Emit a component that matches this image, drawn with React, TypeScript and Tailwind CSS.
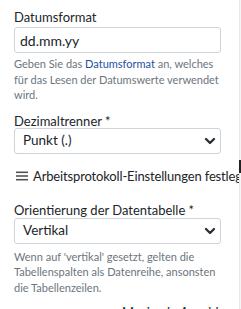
import { ChevronDown } from 'lucide-react';

const font = { fontFamily: 'Lato, "Open Sans", sans-serif' };

const Select = ({ value }: { value: string }) => (
  <div className="flex h-[26px] w-[207px] items-center justify-between rounded-[3px] border border-[#ced4da] bg-white pl-[8px] pr-[2px]">
    <span className="text-[13.5px] text-[#212529]">{value}</span>
    <ChevronDown className="h-[16px] w-[16px] text-[#2b3035]" strokeWidth={3.5} />
  </div>
);

export default function App() {
  return (
    <div className="flex h-[309px] w-[241px] overflow-hidden bg-white" style={font}>
      <div className="w-[239px] shrink-0 overflow-hidden pl-[14px] pt-[10px]">
        {/* Datumsformat */}
        <label className="block text-[13px] leading-[14px] text-[#212529]">Datumsformat</label>
        <div className="mt-[3px] flex h-[26px] w-[207px] items-center rounded-[3px] border border-[#ced4da] bg-white pl-[5px]">
          <span className="text-[14px] text-[#212529]">dd.mm.yy</span>
        </div>
        <p className="mt-[3px] w-[215px] text-[11px] leading-[15.5px] text-[#6c757d]">
          Geben Sie das <span className="text-[#1f4fa3]">Datumsformat</span> an, welches für das Lesen der Datumswerte verwendet wird.
        </p>

        {/* Dezimaltrenner */}
        <label className="mt-[11px] block text-[13px] leading-[14px] text-[#212529]">Dezimaltrenner *</label>
        <Select value="Punkt (.)" />

        {/* Arbeitsprotokoll */}
        <div className="mt-[12px] flex h-[20px] items-center whitespace-nowrap">
          <svg width="12" height="10" viewBox="0 0 12 10" className="ml-[2px] mr-[5px] shrink-0">
            <rect x="0" y="0.5" width="12" height="1.6" fill="#555" />
            <rect x="0" y="4.2" width="12" height="1.6" fill="#555" />
            <rect x="0" y="7.9" width="12" height="1.6" fill="#555" />
          </svg>
          <span className="text-[13px] leading-[20px] tracking-[-0.15px] text-[#212529]">Arbeitsprotokoll-Einstellungen festlegen</span>
        </div>

        {/* Orientierung */}
        <label className="mt-[17px] block text-[13px] leading-[14px] text-[#212529]">Orientierung der Datentabelle *</label>
        <div className="mt-[1px]">
          <Select value="Vertikal" />
        </div>
        <p className="mt-[5px] w-[215px] text-[11px] leading-[15.5px] text-[#6c757d]">
          Wenn auf 'vertikal' gesetzt, gelten die Tabellenspalten als Datenreihe, ansonsten die Tabellenzeilen.
        </p>
        <div className="mt-[10px] pl-[108px] text-[13px] leading-[14px] text-[#212529]">Maximale Anzahl</div>
      </div>
      <div className="relative w-[2px] shrink-0 border-l border-[#e8e8e8] bg-[#f5f5f5]">
        <div className="absolute left-[-1px] top-[160px] h-[13px] w-[2px] bg-[#222]" />
      </div>
    </div>
  );
}
